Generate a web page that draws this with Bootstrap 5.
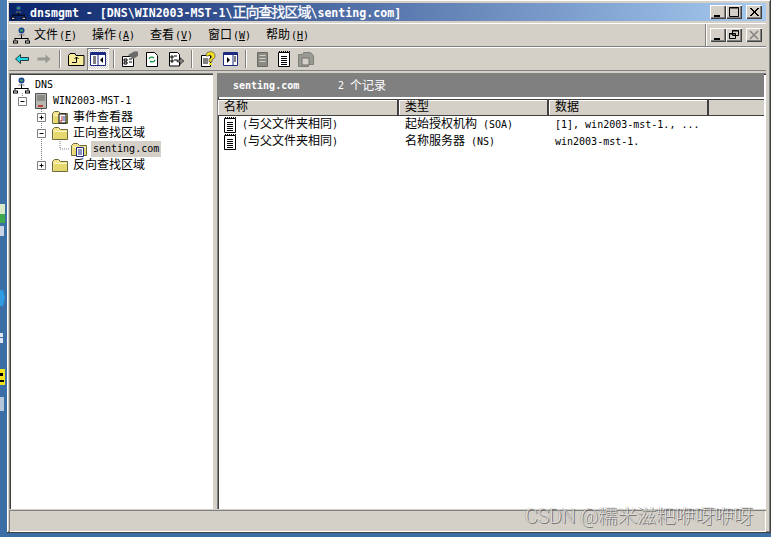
<!DOCTYPE html>
<html lang="en">
  <head>
    <meta charset="UTF-8" />
    <title>dnsmgmt</title>
    <link
      rel="stylesheet"
      href="https://cdn.jsdelivr.net/npm/bootstrap@5.3.0/dist/css/bootstrap.min.css"
    />
    <style>
      html, body { height: 537px; overflow: hidden; }
      body {
        background: #3a6ea5;
        color: #000;
        font-family: "DejaVu Sans Mono", "Noto Sans CJK SC", monospace;
        font-size: 12px;
        line-height: 16px;
      }
      .lat { font-size: 10px; }
      .desk-strip { width: 7px; flex: none; }
      .app-window {
        width: 764px;
        height: 533px;
        background: #d4d0c8;
        border-right: 1px solid #404040;
        border-bottom: 1px solid #404040;
        box-shadow: inset 1px 1px 0 #fff, inset -1px -1px 0 #808080;
        padding: 3px 4px 2px 2px;
        position: relative;
      }
      .title-bar {
        height: 18px;
        background: linear-gradient(90deg, #0a246a, #a6caf0);
        color: #fff;
        font-weight: 700;
        font-size: 11.6px;
        padding-left: 2px;
        white-space: nowrap;
      }
      .title-bar .cjk { font-size: 14px; font-weight: 400; letter-spacing: -1px; -webkit-text-stroke: .3px #fff; }
      .title-text { margin-left: 4px; }
      .win-btn {
        width: 16px;
        height: 14px;
        background: #d4d0c8;
        box-shadow: inset 1px 1px 0 #fff, inset -1px -1px 0 #404040, inset -2px -2px 0 #808080;
        display: block;
      }
      .menu-strip {
        height: 24px;
        margin-top: 2px;
        border-top: 1px solid #fff;
        border-bottom: 1px solid #808080;
      }
      .menu-item { width: 58px; white-space: nowrap; }
      .menu-item .lat { margin-left: 1px; }
      .menu-main { flex: 1; border-right: 1px solid #808080; height: 100%; box-shadow: 1px 0 0 #fff; }
      .tool-strip {
        height: 24px;
        border-top: 1px solid #fff;
        border-bottom: 1px solid #808080;
        padding-left: 2px;
      }
      .tool-sep { width: 2px; height: 18px; border-left: 1px solid #808080; border-right: 1px solid #fff; }
      .tool-btn { width: 22px; height: 22px; display: flex; align-items: center; justify-content: center; flex: none; }
      .tool-btn.on {
        box-shadow: inset 1px 1px 0 #808080, inset -1px -1px 0 #fff;
        background: repeating-conic-gradient(#fff 0 25%, #d4d0c8 0 50%) 0 0 / 2px 2px;
      }
      .tool-btn.nudge { margin-left: 2px; }
      .pane-row { height: 436px; margin-top: 2px; }
      .tree-pane {
        width: 204px;
        flex: none;
        background: #fff;
        box-shadow: inset 1px 1px 0 #808080, inset 2px 2px 0 #404040, inset -1px -1px 0 #fff;
        padding: 4px 2px 2px;
        position: relative;
      }
      .tree-row { height: 16px; display: flex; align-items: center; white-space: nowrap; }
      .tree-row svg { flex: none; }
      .tree-lines { position: absolute; left: -1px; top: 2px; }
      .lvl-0 { padding-left: 2px; }
      .lvl-1 { padding-left: 24px; }
      .lvl-2 { padding-left: 41px; }
      .lvl-3 { padding-left: 60px; }
      .tree-label { margin-left: 3px; padding: 0 2px; }
      .tree-label.sel { background: #d4d0c8; width: 70px; margin-left: 1px; height: 16px; }
      .detail-pane {
        flex: 1;
        margin-left: 4px;
        background: #fff;
        box-shadow: inset 1px 1px 0 #808080, inset 2px 2px 0 #404040, inset -1px -1px 0 #fff;
        padding: 1px 2px 2px 1px;
        overflow: hidden;
      }
      .detail-head {
        height: 23px;
        background: #808080;
        color: #fff;
        padding-left: 15px;
        white-space: nowrap;
      }
      .detail-head b { width: 105px; display: inline-block; }
      .col-heads { height: 17px; margin-top: 2px; background: #d4d0c8; border-top: 1px solid #404040; border-bottom: 1px solid #404040; line-height: 15px; }
      .col-head {
        height: 100%;
        border-right: 2px solid #404040;
        box-shadow: inset 1px 1px 0 #fff;
        padding-left: 6px;
        flex: none;
      }
      .col-w1 { width: 181px; }
      .col-w2 { width: 150px; }
      .col-w3 { width: 160px; }
      .rec-row { height: 17px; display: flex; align-items: center; white-space: nowrap; }
      .rec-name { width: 181px; padding-left: 5px; display: flex; align-items: center; gap: 5px; flex: none; }
      .rec-type { width: 150px; padding-left: 6px; flex: none; }
      .rec-data { padding-left: 6px; }
      .status-strip { height: 22px; margin-top: 1px; box-shadow: inset 1px 1px 0 #808080, inset -1px -1px 0 #fff; }
      .watermark {
        position: absolute;
        left: 518px;
        bottom: 3px;
        font-family: Roboto, "Noto Sans CJK SC", sans-serif;
        font-size: 19.4px;
        font-weight: 300;
        line-height: 24px;
        white-space: nowrap;
        color: rgba(245, 245, 245, .65);
        text-shadow: 1px 1px 0 rgba(70, 70, 70, .65), -1px 0 0 rgba(120, 120, 120, .35);
      }
    </style>
  </head>

  <body>
    <svg width="0" height="0" class="position-absolute">
      <symbol id="net" viewBox="0 0 17 17">
        <circle cx="8.5" cy="3.5" r="3" fill="#1c3f94" />
        <path d="M7 2.500h3v2H7z" fill="#3aa655" />
        <path d="M8.500 7v4M1.500 11.500h14M2 11.500v2M15 11.500v2" stroke="#000" fill="none" />
        <path d="M0 13.500h5v3H0zM12 13.500h5v3h-5z" fill="#000" />
        <path d="M1 14.500h3v1H1zM13 14.500h3v1h-3z" fill="#fff" />
        <path d="M5.500 7.500h6v1h-6z" fill="#808080" />
      </symbol>
      <symbol id="folder" viewBox="0 0 16 14">
        <path d="M.5 3.500 2.500 1.500h4l2 2h7v10H.5z" fill="#f3e28e" stroke="#6b6b3a" />
        <path d="M2 5h13v8H2z" fill="#e6d76f" />
        <path d="M2 5h13v1H2z" fill="#fff8c8" />
      </symbol>
      <symbol id="doc" viewBox="0 0 14 16">
        <path d="M1.500 1.500h11v14h-11z" fill="#fff" stroke="#000" />
        <path d="M2 .5h1M4 .5h1M6 .5h1M8 .5h1M10 .5h1M12 .5h1" stroke="#000" />
        <path d="M4 5.500h6M4 7.500h6M4 9.500h6M4 11.500h6M4 13.500h6" stroke="#000" />
      </symbol>
    </svg>

    <div class="d-flex">
      <svg class="desk-strip" width="7" height="537" viewBox="0 0 7 537">
        <path d="M0 0h7v40H0z" fill="#4a7db2" />
        <path d="M0 204h5v10H0z" fill="#d8e8c8" />
        <path d="M0 214h5v9H0z" fill="#3fa84a" />
        <path d="M0 226h4v10H0z" fill="#c8d4e4" />
        <path d="M0 290h3l2 7-2 9H0z" fill="#2f9be0" />
        <path d="M0 333h3v4H0zM0 338h3v5H0z" fill="#dde6f2" />
        <path d="M0 369h5v16H0z" fill="#f2e21c" />
        <path d="M0 373h3v3H0zM0 380h4v2H0z" fill="#000" />
        <path d="M0 397h4v14H0z" fill="#b8c8dc" />
      </svg>

      <div class="app-window">
        <div class="title-bar d-flex align-items-center">
          <svg width="15" height="15"><use href="#net" /></svg>
          <span class="title-text flex-grow-1">dnsmgmt - [DNS\WIN2003-MST-1\<span class="cjk">正向查找区域</span>\senting.com]</span>
          <span class="d-flex me-1">
            <svg class="win-btn" viewBox="0 0 16 14"><path d="M4 10h6v2H4z" /></svg>
            <svg class="win-btn" viewBox="0 0 16 14"><path d="M3.500 2.500h9v9h-9zM3 3h10" fill="none" stroke="#000" /></svg>
            <svg class="win-btn ms-1" viewBox="0 0 16 14"><path d="m4 3 8 8M5 3l8 8M12 3l-8 8M13 3l-8 8" stroke="#000" /></svg>
          </span>
        </div>

        <div class="menu-strip d-flex align-items-center">
          <div class="menu-main d-flex align-items-center">
            <svg class="ms-1 me-1" width="17" height="17"><use href="#net" /></svg>
            <span class="menu-item">文件<span class="lat">(<u>F</u>)</span></span>
            <span class="menu-item">操作<span class="lat">(<u>A</u>)</span></span>
            <span class="menu-item">查看<span class="lat">(<u>V</u>)</span></span>
            <span class="menu-item">窗口<span class="lat">(<u>W</u>)</span></span>
            <span class="menu-item">帮助<span class="lat">(<u>H</u>)</span></span>
          </div>
          <div class="d-flex ms-1 me-1">
            <svg class="win-btn" viewBox="0 0 16 14"><path d="M4 10h6v2H4z" /></svg>
            <svg class="win-btn" viewBox="0 0 16 14"><path d="M6.500 2.500h6v5h-6zM3.500 5.500h6v5h-6zM6 3h7M3 6h7" fill="none" stroke="#000" /></svg>
            <svg class="win-btn ms-1" viewBox="0 0 16 14"><path d="m4 3 8 8M12 3l-8 8" stroke="#808080" stroke-width="1.500" /></svg>
          </div>
        </div>

        <div class="tool-strip d-flex align-items-center">
          <span class="tool-btn"><svg width="14" height="10" viewBox="0 0 14 10"><path d="M.5 5 5.500.5v3h8v3h-8v3z" fill="#22d3e6" stroke="#000" stroke-width=".7" /></svg></span>
          <span class="tool-btn"><svg width="14" height="10" viewBox="0 0 14 10"><path d="M13.500 5 8.500.5v3h-8v3h8v3z" fill="#9a9a94" /></svg></span>
          <span class="tool-sep mx-1"></span>
          <span class="tool-btn"><svg width="17" height="14" viewBox="0 0 17 14"><path d="M.5 3.500 2 1.500h5l1 2h8v10H.5z" fill="#f6ec9c" stroke="#000" /><path d="M8.500 5v5.500H4M8.500 5 6.500 7M8.500 5l2 2" fill="none" stroke="#000" /></svg></span>
          <span class="tool-btn on"><svg width="16" height="14" viewBox="0 0 16 14"><path d="M.5.500h15v13H.5z" fill="#fff" stroke="#1a2a80" /><path d="M1 1h14v2H1z" fill="#1a2a80" /><path d="M3 5h3M3 7h3M3 9h3M3 11h3" stroke="#000" /><path d="M8 3v10" stroke="#1a2a80" /><path d="M13 5v6l-3-3z" /></svg></span>
          <span class="tool-sep mx-1"></span>
          <span class="tool-btn"><svg width="18" height="16" viewBox="0 0 18 16"><path d="M1.500 5.500h11v10h-11z" fill="#fff" stroke="#000" /><path d="M3 8h3v2H3zM3 11h3v2H3zM8 8h3M8 11h3" stroke="#000" fill="none" /><path d="M7 4 13 .5h4V5l-5 3z" fill="#6a6a6a" /></svg></span>
          <span class="tool-btn"><svg width="14" height="15" viewBox="0 0 14 15"><path d="M1.500 .5h8l3 3v11h-11z" fill="#fff" stroke="#000" /><path d="M4 7a3 3 0 0 1 5-1M10 8a3 3 0 0 1-5 1" fill="none" stroke="#159a3c" stroke-width="1.300" /></svg></span>
          <span class="tool-btn nudge"><svg width="16" height="15" viewBox="0 0 16 15"><path d="M1.500 .5h8l2 2v11.500h-10z" fill="#fff" stroke="#000" /><path d="M3 4h2v2H3zM3 8h2v2H3zM6 4h3M6 8h3" stroke="#000" fill="none" /><path d="M9 8h3V5.500L16 9l-4 3.500V10H9z" fill="#808080" stroke="#000" stroke-width=".5" /></svg></span>
          <span class="tool-sep mx-1"></span>
          <span class="tool-btn"><svg width="16" height="16" viewBox="0 0 16 16"><path d="M1.500 4.500h9v11h-9z" fill="#fff" stroke="#000" /><path d="M3 8h5M3 10h5M3 12h5" stroke="#000" /><path d="M6 5a4.500 4 0 1 1 6 3.500V11H9V7.500c2 0 2.500-.5 2.500-2S8.500 4 8.500 5z" fill="#f4e020" stroke="#333" stroke-width=".6" /><path d="M9 12h3v2H9z" fill="#f4e020" /></svg></span>
          <span class="tool-btn"><svg width="15" height="14" viewBox="0 0 15 14"><path d="M.5.500h14v13H.5z" fill="#fff" stroke="#1a2a80" /><path d="M1 1h13v2H1z" fill="#1a2a80" /><path d="M10 3v10" stroke="#1a2a80" /><path d="M4 5v6l3-3z" /><path d="M11 5h2M11 7h2M11 9h2" stroke="#000" /></svg></span>
          <span class="tool-sep mx-1"></span>
          <span class="tool-btn"><svg width="11" height="16" viewBox="0 0 11 16"><path d="M.5 1.500h10v14H.5z" fill="#8a8a84" stroke="#6a6a64" /><path d="M2.500 4.500h6M2.500 7.500h6M2.500 10.500h6" stroke="#d4d0c8" /></svg></span>
          <span class="tool-btn"><svg width="14" height="16"><use href="#doc" /></svg></span>
          <span class="tool-btn"><svg width="16" height="15" viewBox="0 0 16 15"><path d="M.5 2.500h4l1-2h7l3 3v9h-5v2h-10z" fill="#9a9a94" stroke="#80807a" /><path d="M4 6h7v7H4z" fill="#d4d0c8" stroke="#707070" /></svg></span>
        </div>

        <div class="pane-row d-flex">
          <div class="tree-pane">
            <svg class="tree-lines" width="90" height="170" stroke="#808080" stroke-dasharray="1 1" fill="none">
              <path d="M14.500 18v8M14.500 26h4M33.500 34v56M33.500 42h4M33.500 58h4M33.500 90h4M52 66v8M52 74h9" />
            </svg>
            <svg class="tree-lines" width="60" height="110">
              <g fill="#fff" stroke="#808080">
                <path d="M10.500 22.500h8v8h-8zM29.500 38.500h8v8h-8zM29.500 54.500h8v8h-8zM29.500 86.500h8v8h-8z" />
              </g>
              <path d="M12.500 26.500h4M31.500 42.500h4M33.500 40.500v4M31.500 58.500h4M31.500 90.500h4M33.500 88.500v4" stroke="#000" />
            </svg>
            <div class="tree-row lvl-0 position-relative"><svg width="17" height="17"><use href="#net" /></svg><span class="tree-label lat">DNS</span></div>
            <div class="tree-row lvl-1 position-relative"><svg width="12" height="16" viewBox="0 0 12 16"><path d="M.5.500h11v15H.5z" fill="#b8b8b0" stroke="#505050" /><path d="M2 3h8M2 5h8M2 7h8" stroke="#606060" /><path d="M3 12h5v2H3z" fill="#c04040" /></svg><span class="tree-label lat ms-1">WIN2003-MST-1</span></div>
            <div class="tree-row lvl-2 position-relative"><svg width="16" height="14" viewBox="0 0 16 14"><use href="#folder" width="16" height="14" /><path d="M7 4h7v9H7z" fill="#fff" stroke="#000" /><path d="M10 6v5h-2" stroke="#c02020" fill="none" /><path d="M12 6v5" stroke="#1a3ca0" /></svg><span class="tree-label">事件查看器</span></div>
            <div class="tree-row lvl-2 position-relative"><svg width="16" height="14"><use href="#folder" /></svg><span class="tree-label">正向查找区域</span></div>
            <div class="tree-row lvl-3 position-relative"><svg width="16" height="15" viewBox="0 0 16 15"><use href="#folder" width="16" height="14" /><path d="M5.500 5.500h7v9h-7z" fill="#fff" stroke="#1a2a80" /><path d="M7 8h4M7 10h4M7 12h4" stroke="#1a2a80" /></svg><span class="tree-label lat sel ms-1">senting.com</span></div>
            <div class="tree-row lvl-2 position-relative"><svg width="16" height="14"><use href="#folder" /></svg><span class="tree-label">反向查找区域</span></div>
          </div>

          <div class="detail-pane">
            <div class="detail-head d-flex align-items-center">
              <b class="lat">senting.com</b><span class="lat">2&nbsp;</span><span>个记录</span>
            </div>
            <div class="col-heads d-flex">
              <div class="col-head col-w1">名称</div>
              <div class="col-head col-w2">类型</div>
              <div class="col-head col-w3">数据</div>
            </div>
            <div class="rec-row">
              <span class="rec-name"><svg width="14" height="16"><use href="#doc" /></svg><span><span class="lat">(</span>与父文件夹相同<span class="lat">)</span></span></span>
              <span class="rec-type">起始授权机构<span class="lat"> (SOA)</span></span>
              <span class="rec-data lat">[1], win2003-mst-1., ...</span>
            </div>
            <div class="rec-row">
              <span class="rec-name"><svg width="14" height="16"><use href="#doc" /></svg><span><span class="lat">(</span>与父文件夹相同<span class="lat">)</span></span></span>
              <span class="rec-type">名称服务器<span class="lat"> (NS)</span></span>
              <span class="rec-data lat">win2003-mst-1.</span>
            </div>
          </div>
        </div>

        <div class="status-strip"></div>
        <div class="watermark">CSDN @糯米滋粑咿呀咿呀</div>
      </div>
    </div>
  </body>
</html>
